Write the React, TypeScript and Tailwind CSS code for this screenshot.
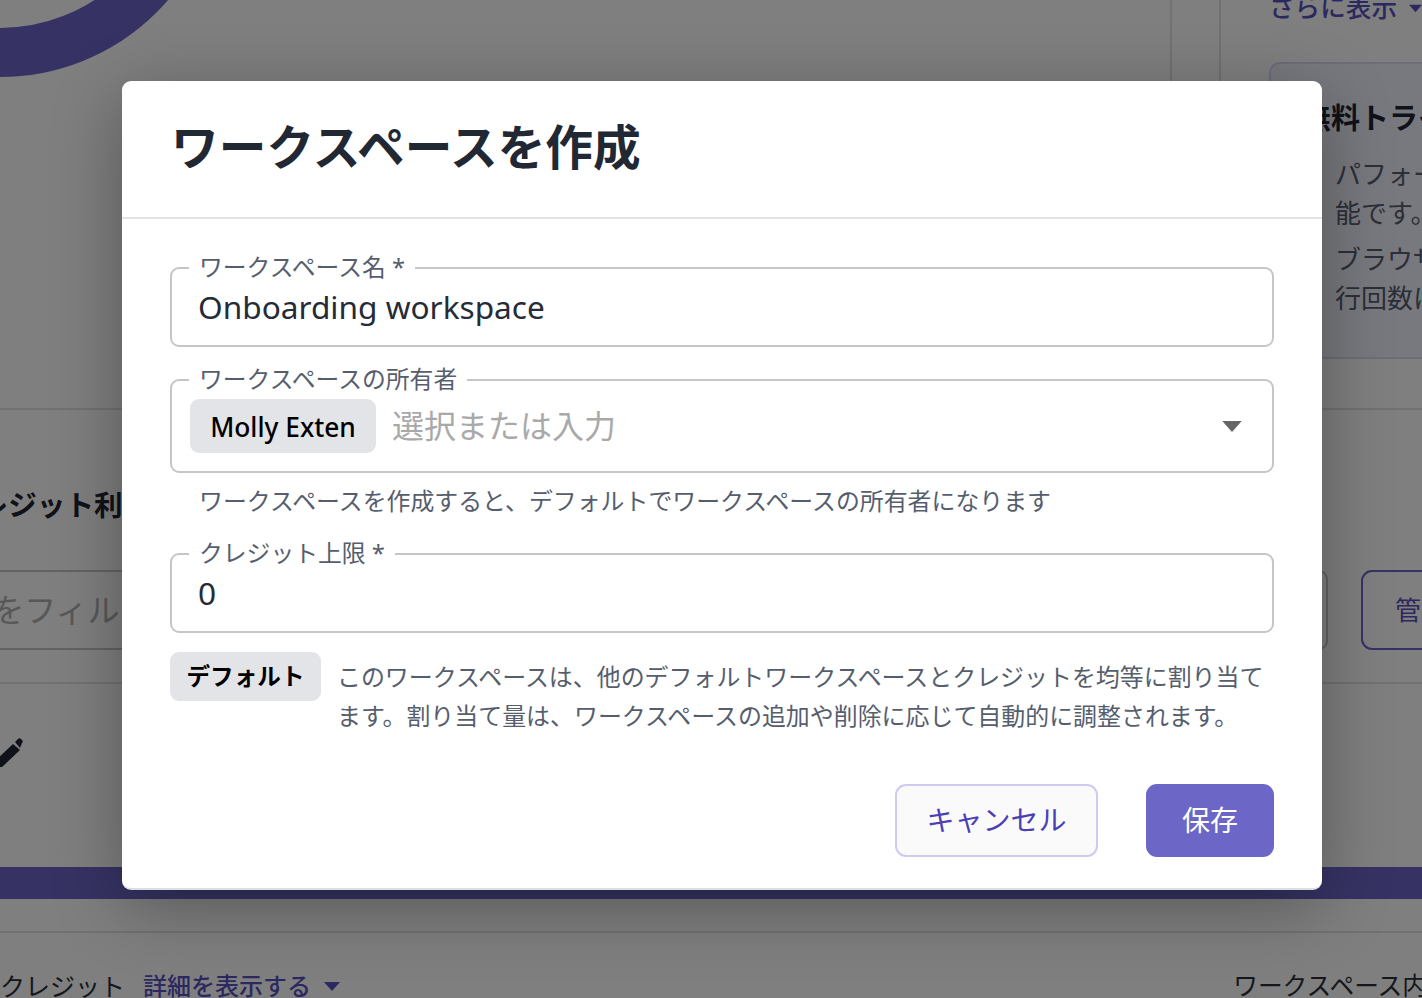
function Caret({ className = "" }: { className?: string }) {
  return (
    <svg viewBox="0 0 16 9" className={className} fill="currentColor">
      <path d="M0 0h16L8 9z" />
    </svg>
  );
}

function Field({ label, children, className = "" }: { label: string; children: React.ReactNode; className?: string }) {
  return (
    <div className={`relative rounded-[9px] border-2 border-[#c6c6c6] ${className}`}>
      <span className="absolute left-[17px] top-[-16px] bg-white px-[10px] text-[23.8px] leading-[28px] text-[#565e6e]">
        {label}
      </span>
      {children}
    </div>
  );
}

function BackgroundPage() {
  return (
    <div className="flex h-[998px] w-[1422px] flex-col overflow-hidden bg-white text-[#2a2f3a]">
      {/* top section */}
      <div className="flex h-[410px] shrink-0 border-b-2 border-[#e2e2e2]">
        <div className="flex w-[1172px] shrink-0 items-start border-r-2 border-[#e2e2e2]">
          <svg width="200" height="80" viewBox="0 0 200 80" className="shrink-0">
            <circle cx="0" cy="-145" r="197.5" fill="none" stroke="#6c66c8" strokeWidth="49" />
          </svg>
          <div className="ml-[516px] mt-[-34px] flex w-[110px] justify-between text-[27px] leading-[38px]">
            <span>(</span>
            <span>)</span>
          </div>
        </div>
        <div className="w-[49px] shrink-0 border-r-2 border-[#e2e2e2]" />
        <div className="flex min-w-0 flex-1 flex-col pl-[48px]">
          <div className="mt-[-11px] flex h-[38px] shrink-0 items-center gap-3 whitespace-nowrap text-[25.6px] font-medium text-[#5850c0]">
            さらに表示
            <Caret className="h-[9px] w-[16px]" />
          </div>
          <div className="mt-[35px] h-[297px] w-[300px] shrink-0 rounded-[11px] border-2 border-[#d8d8f6] bg-[#f1f2fd] pl-[31px] pt-[34px]">
            <div className="whitespace-nowrap text-[29px] font-bold leading-[40px] text-[#1f2430]">無料トライアル</div>
            <div className="ml-[33px] mt-[17px] whitespace-nowrap text-[26px] leading-[39px] text-[#565e6e]">
              <div>パフォーマンス</div>
              <div>能です。</div>
              <div className="mt-[7px]">ブラウザ</div>
              <div>行回数に</div>
            </div>
          </div>
        </div>
      </div>

      {/* credit heading */}
      <div className="flex h-[160px] shrink-0 items-start overflow-hidden">
        <div className="ml-[-49px] mt-[75px] whitespace-nowrap text-[28.6px] font-bold leading-[40px] text-[#1f2430]">
          クレジット利用
        </div>
      </div>

      {/* filter row */}
      <div className="flex h-[80px] shrink-0 gap-[33px]">
        <div className="ml-[-229px] flex h-[80px] w-[1557px] shrink-0 items-center rounded-[9px] border-2 border-[#c6c6c6] text-[32px] text-[#b0b0b0]">
          <span className="whitespace-nowrap">ワークスペースをフィルター</span>
        </div>
        <div className="flex h-[80px] w-[200px] shrink-0 items-center rounded-[11px] border-2 border-[#6c66c8] pl-[32px] text-[26px] text-[#5850c0]">
          管理
        </div>
      </div>

      <div className="h-[34px] shrink-0 border-b-2 border-[#e2e2e2]" />

      {/* pencil row */}
      <div className="h-[183px] shrink-0 pt-[53px]">
        <svg width="24" height="30" viewBox="0 0 24 30" fill="#1f2430">
          <path d="M-6 25 13 7l7 6-19 18z" />
          <path d="M15 5l3-3c1-1 2-1 3 0l1 1c1 1 1 2 0 3l-2 5z" />
        </svg>
      </div>

      <div className="h-[32px] shrink-0 bg-[#6c66c8]" />
      <div className="h-[34px] shrink-0 border-b-2 border-[#e2e2e2]" />

      {/* bottom row */}
      <div className="flex shrink-0 items-center justify-between pt-[36px] whitespace-nowrap">
        <div className="flex items-center">
          <span className="text-[25px] leading-[34px]">クレジット</span>
          <span className="ml-[18px] text-[24px] font-medium leading-[34px] text-[#5850c0]">詳細を表示する</span>
          <Caret className="ml-[13px] h-[9px] w-[16px] text-[#5850c0]" />
        </div>
        <span className="mr-[-5px] text-[24.7px] leading-[34px]">ワークスペース内</span>
      </div>
    </div>
  );
}

export default function App() {
  return (
    <div className="relative h-[998px] w-[1422px] overflow-hidden font-['Noto_Sans','Noto_Sans_CJK_JP',sans-serif]">
      <BackgroundPage />

      <div className="absolute inset-0 bg-black/50 pl-[122px] pt-[81px]">
        <div className="flex h-[809px] w-[1200px] flex-col rounded-[9px] border-b-2 border-[#dedede] bg-white shadow-[0_16px_70px_rgba(0,0,0,0.32)]">
          <header className="flex h-[138px] shrink-0 items-center border-b-2 border-[#e3e3e3] pb-[5px] pl-[49px]">
            <h1 className="text-[47.7px] font-bold leading-[60px] text-[#212833]">ワークスペースを作成</h1>
          </header>

          <div className="flex flex-1 flex-col px-[48px] pt-[48px]">
            <Field label="ワークスペース名 *" className="flex h-[80px] shrink-0 items-center pl-[26px]">
              <span className="text-[31.6px] leading-[40px] text-[#252b37]">Onboarding workspace</span>
            </Field>

            <Field label="ワークスペースの所有者" className="mt-[32px] flex h-[94px] shrink-0 items-center pl-[18px] pr-[30px]">
              <span className="flex h-[54px] w-[186px] shrink-0 items-center justify-center rounded-[9px] bg-[#e3e4e8] pt-[3px] text-[26.3px] font-medium text-black">
                Molly Exten
              </span>
              <span className="ml-[16px] flex-1 text-[32px] leading-[40px] text-[#a9a9a9]">選択または入力</span>
              <Caret className="h-[11px] w-[20px] text-[#666666]" />
            </Field>

            <p className="ml-[29px] mt-[13px] text-[23.9px] leading-[30px] text-[#565e6e]">
              ワークスペースを作成すると、デフォルトでワークスペースの所有者になります
            </p>

            <Field label="クレジット上限 *" className="mt-[37px] flex h-[80px] shrink-0 items-center pl-[26px]">
              <span className="text-[31.6px] leading-[40px] text-[#252b37]">0</span>
            </Field>

            <div className="mt-[19px] flex shrink-0 items-start gap-[16px]">
              <span className="flex h-[49px] w-[151px] shrink-0 items-center justify-center rounded-[9px] bg-[#e3e4e8] text-[23.6px] font-bold text-black">
                デフォルト
              </span>
              <p className="mt-[5px] text-[23.95px] leading-[39px] text-[#565e6e]">
                このワークスペースは、他のデフォルトワークスペースとクレジットを均等に割り当てます。割り当て量は、ワークスペースの追加や削除に応じて自動的に調整されます。
              </p>
            </div>

            <div className="mt-auto flex justify-end gap-[48px] pb-[31px]">
              <button className="h-[73px] w-[203px] rounded-[11px] border-2 border-[#cfcbf0] bg-[#fafafa] pb-[2px] text-[28px] text-[#4a40b4]">
                キャンセル
              </button>
              <button className="h-[73px] w-[128px] rounded-[11px] bg-[#6c67c6] pb-[2px] text-[28px] text-white">保存</button>
            </div>
          </div>
        </div>
      </div>
    </div>
  );
}
